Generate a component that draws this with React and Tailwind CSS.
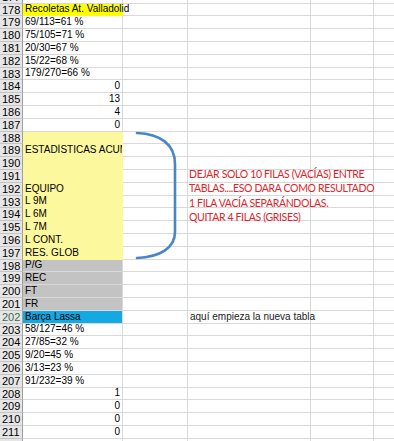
import React from "react";

const W = { h: "w-[23px]", a: "w-[100px]", b: "w-[65px]", c: "w-[123px]", d: "w-[63px]" };

const rows = [
  { n: 177, a: "1", right: true },
  { n: 178, a: "Recoletas At. Valladolid", fill: "bg-[#ffff00] border-[#ffff00]", overflow: true },
  { n: 179, a: "69/113=61 %" },
  { n: 180, a: "75/105=71 %" },
  { n: 181, a: "20/30=67 %" },
  { n: 182, a: "15/22=68 %" },
  { n: 183, a: "179/270=66 %" },
  { n: 184, a: "0", right: true },
  { n: 185, a: "13", right: true },
  { n: 186, a: "4", right: true },
  { n: 187, a: "0", right: true },
  { n: 188, a: "", fill: "bg-[#fcf89d] border-[#fcf89d]" },
  { n: 189, a: "ESTADÍSTICAS ACUMULADAS", fill: "bg-[#fcf89d] border-[#fcf89d]" },
  { n: 190, a: "", fill: "bg-[#fcf89d] border-[#fcf89d]" },
  { n: 191, a: "", fill: "bg-[#fcf89d] border-[#fcf89d]" },
  { n: 192, a: "EQUIPO", fill: "bg-[#fcf89d] border-[#fcf89d]" },
  { n: 193, a: "L 9M", fill: "bg-[#fcf89d] border-[#fcf89d]" },
  { n: 194, a: "L 6M", fill: "bg-[#fcf89d] border-[#fcf89d]" },
  { n: 195, a: "L 7M", fill: "bg-[#fcf89d] border-[#fcf89d]" },
  { n: 196, a: "L CONT.", fill: "bg-[#fcf89d] border-[#fcf89d]" },
  { n: 197, a: "RES. GLOB", fill: "bg-[#fcf89d] border-[#fcf89d]" },
  { n: 198, a: "P/G", fill: "bg-[#c3c3c3] border-[#c3c3c3]" },
  { n: 199, a: "REC", fill: "bg-[#c3c3c3] border-[#c3c3c3]" },
  { n: 200, a: "FT", fill: "bg-[#c3c3c3] border-[#c3c3c3]" },
  { n: 201, a: "FR", fill: "bg-[#c3c3c3] border-[#c3c3c3]" },
  { n: 202, a: "Barça Lassa", fill: "bg-[#14a9e2] border-[#14a9e2]", c: "aquí empieza la nueva tabla", sel: true },
  { n: 203, a: "58/127=46 %" },
  { n: 204, a: "27/85=32 %" },
  { n: 205, a: "9/20=45 %" },
  { n: 206, a: "3/13=23 %" },
  { n: 207, a: "91/232=39 %" },
  { n: 208, a: "1", right: true },
  { n: 209, a: "0", right: true },
  { n: 210, a: "0", right: true },
  { n: 211, a: "0", right: true },
  { n: 212, a: "", right: true },
];

function Row({ r }) {
  const cell = "h-full border-r border-b border-[#d9d9d9] shrink-0";
  return (
    <div className="flex h-[12.8px] text-[10px] leading-[12px] text-black">
      <div
        className={`${W.h} h-full shrink-0 bg-[#e6e6e6] border-r border-r-[#9e9e9e] border-b border-b-[#c4c4c4] pl-[2px] text-[11px] leading-[12.8px] ${r.sel ? "text-[#3b6a4c]" : "text-black"}`}
      >
        {r.n}
      </div>
      <div
        className={`${W.a} ${cell} ${r.fill || ""} flex items-end px-[2px] ${r.right ? "justify-end" : ""} ${r.overflow ? "overflow-visible relative z-10" : "overflow-hidden"} whitespace-nowrap`}
      >
        <span>{r.a}</span>
      </div>
      <div className={`${W.b} ${cell}`}></div>
      <div className={`${W.c} ${cell} flex items-end px-[2px] whitespace-nowrap text-[#222]`}>
        {r.c ? <span>{r.c}</span> : null}
      </div>
      <div className={`${W.d} ${cell}`}></div>
      <div className="flex-1 h-full border-b border-[#d9d9d9]"></div>
    </div>
  );
}

export default function App() {
  return (
    <div
      className="relative w-[394px] h-[441px] overflow-hidden bg-white"
      style={{ fontFamily: '"Liberation Sans", Arial, sans-serif' }}
    >
      <div className="mt-[-9.2px]">
        {rows.map((r) => (
          <Row key={r.n} r={r} />
        ))}
      </div>
      <svg className="absolute left-[130px] top-[128px]" width="60" height="136" viewBox="0 0 60 136">
        <path
          d="M7 5 C 30 6, 45 16, 45 36 L 45 104 C 45 120, 30 129, 7 130"
          fill="none"
          stroke="#4a86c5"
          strokeWidth="2.6"
          strokeLinecap="round"
        />
      </svg>
      <div
        className="absolute left-[189px] top-[167px] text-[10.5px] tracking-[-0.35px] leading-[14.3px] text-[#e0242a] whitespace-nowrap"
        style={{ fontFamily: 'Lato, "Open Sans", sans-serif' }}
      >
        <div>DEJAR SOLO 10 FILAS (VACÍAS) ENTRE</div>
        <div>TABLAS....ESO DARA COMO RESULTADO</div>
        <div>1 FILA VACÍA SEPARÁNDOLAS.</div>
        <div>QUITAR 4 FILAS (GRISES)</div>
      </div>
    </div>
  );
}
